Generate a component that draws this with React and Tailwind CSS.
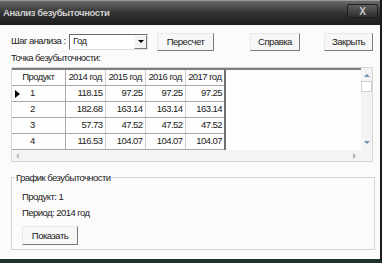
import React from 'react';

const rows = [
    { id: '1', v: ['118.15', '97.25', '97.25', '97.25'], active: true },
    { id: '2', v: ['182.68', '163.14', '163.14', '163.14'] },
    { id: '3', v: ['57.73', '47.52', '47.52', '47.52'] },
    { id: '4', v: ['116.53', '104.07', '104.07', '104.07'] },
    { id: '5', v: ['', '', '', ''] },
];

function Btn({ children, className = '' }) {
    return (
        <button className={`h-[18px] bg-[#f7f7f7] border border-t-[#e8e8e8] border-l-[#e8e8e8] border-r-[#7a7a7a] border-b-[#7a7a7a] text-[9.5px] tracking-[-0.5px] text-[#222] leading-none ${className}`}>
            {children}
        </button>
    );
}

export default function App() {
    return (
        <div className="w-[385px] h-[270px] bg-white overflow-hidden" style={{ fontFamily: '"Liberation Sans", Arial, sans-serif' }}>
            <div className="w-[382px] h-[263px] flex flex-col border-r-2 border-r-[#1a1a1a] border-b-4 border-b-[#1d3329]">
                {/* Title bar */}
                <div className="h-[25px] shrink-0 flex items-center justify-between pl-[3px] pr-[2px] bg-gradient-to-b from-[#6a6a6a] via-[#333] to-[#1c1c1c] border-t border-t-[#9a9a9a]">
                    <span className="text-[9.5px] font-bold text-[#cfcfcf] tracking-[-0.4px]">Анализ безубыточности</span>
                    <div className="w-[31px] h-[14px] mb-[4px] flex items-center justify-center rounded-[2px] bg-gradient-to-b from-[#5e5e5e] to-[#2e2e2e] border border-[#222] text-[10px] font-bold text-[#c8c8c8]">X</div>
                </div>

                {/* Body */}
                <div className="flex-1 bg-[#fbfbfb] pl-[11px] pr-[7px] text-[9.5px] tracking-[-0.55px] text-[#222]">
                    <div className="mt-[8px] flex items-center h-[17px]">
                        <span className="w-[58px] whitespace-nowrap">Шаг анализа :</span>
                        <div className="w-[79px] h-[16px] flex items-center justify-between bg-white border border-t-[#6a6a6a] border-l-[#6a6a6a] border-r-[#e0e0e0] border-b-[#e0e0e0]">
                            <span className="pl-[3px]">Год</span>
                            <div className="w-[13px] h-[14px] flex items-center justify-center bg-[#f2f2f2] border border-r-[#7a7a7a] border-b-[#7a7a7a] border-t-white border-l-white">
                                <div className="w-0 h-0 border-l-[3px] border-r-[3px] border-t-[3px] border-l-transparent border-r-transparent border-t-black" />
                            </div>
                        </div>
                        <Btn className="ml-[9px] w-[57px]">Пересчет</Btn>
                        <Btn className="ml-auto w-[50px]">Справка</Btn>
                        <Btn className="ml-[24px] w-[49px]">Закрыть</Btn>
                    </div>

                    <div className="mt-[2px] leading-[12px]">Точка безубыточности:</div>

                    {/* Grid */}
                    <div className="mt-[3px] w-[362px] h-[95px] border border-[#d6d6d6] flex flex-col bg-[#fdfdfd]">
                        <div className="flex h-[82px]">
                            <div className="flex-1 border-t-2 border-t-[#7d7d7d] overflow-hidden">
                                <table className="border-collapse table-fixed">
                                    <thead>
                                        <tr className="h-[15px]">
                                            <th className="w-[53px] font-normal border-r border-b border-[#a8a8a8] text-center">Продукт</th>
                                            {['2014 год', '2015 год', '2016 год', '2017 год'].map((y, i) => (
                                                <th key={y} className={`w-[40px] font-normal border-b border-[#a8a8a8] text-center whitespace-nowrap ${i === 3 ? 'border-r-2 border-r-[#6f6f6f]' : 'border-r border-r-[#cfcfcf]'}`}>{y}</th>
                                            ))}
                                        </tr>
                                    </thead>
                                    <tbody>
                                        {rows.map((r) => (
                                            <tr key={r.id} className="h-[16px]">
                                                <td className="relative border-r border-b border-[#a8a8a8] pl-[18px]">
                                                    {r.active && (
                                                        <span className="absolute left-[3px] top-[4px] w-0 h-0 border-t-[4px] border-b-[4px] border-l-[5px] border-t-transparent border-b-transparent border-l-black" />
                                                    )}
                                                    {r.id}
                                                </td>
                                                {r.v.map((v, i) => (
                                                    <td key={i} className={`border-b border-b-[#a8a8a8] text-right pr-[2px] ${i === 3 ? 'border-r-2 border-r-[#6f6f6f]' : 'border-r border-r-[#cfcfcf]'}`}>{v}</td>
                                                ))}
                                            </tr>
                                        ))}
                                    </tbody>
                                </table>
                            </div>
                            {/* Vertical scrollbar */}
                            <div className="w-[11px] bg-[#f3f3f3] flex flex-col items-center pt-[6px]">
                                <div className="w-0 h-0 border-l-[3px] border-r-[3px] border-b-[3px] border-l-transparent border-r-transparent border-b-[#6a8fc0]" />
                                <div className="mt-[4px] w-[11px] h-[11px] bg-white border border-[#d0d0d0]" />
                                <div className="mt-auto mb-[6px] w-0 h-0 border-l-[3px] border-r-[3px] border-t-[3px] border-l-transparent border-r-transparent border-t-[#6a8fc0]" />
                            </div>
                        </div>
                        {/* Horizontal scrollbar */}
                        <div className="flex-1 bg-[#f4f4f4] flex items-center justify-between pl-[4px] pr-[16px]">
                            <div className="w-0 h-0 border-t-[3px] border-b-[3px] border-r-[3px] border-t-transparent border-b-transparent border-r-[#c0c0c0]" />
                            <div className="w-0 h-0 border-t-[3px] border-b-[3px] border-l-[3px] border-t-transparent border-b-transparent border-l-[#b0b0b0]" />
                        </div>
                    </div>

                    {/* Group box */}
                    <div className="relative mt-[15px] w-[364px] h-[73px] border border-[#d4d4d4] pl-[10px] pt-[13px]">
                        <span className="absolute left-[3px] -top-[7px] px-[1px] bg-[#fbfbfb]">График безубыточности</span>
                        <div className="leading-[12px]">Продукт: 1</div>
                        <div className="mt-[4px] leading-[12px]">Период: 2014 год</div>
                        <Btn className="mt-[7px] w-[56px] h-[19px]">Показать</Btn>
                    </div>
                </div>
            </div>
        </div>
    );
}
